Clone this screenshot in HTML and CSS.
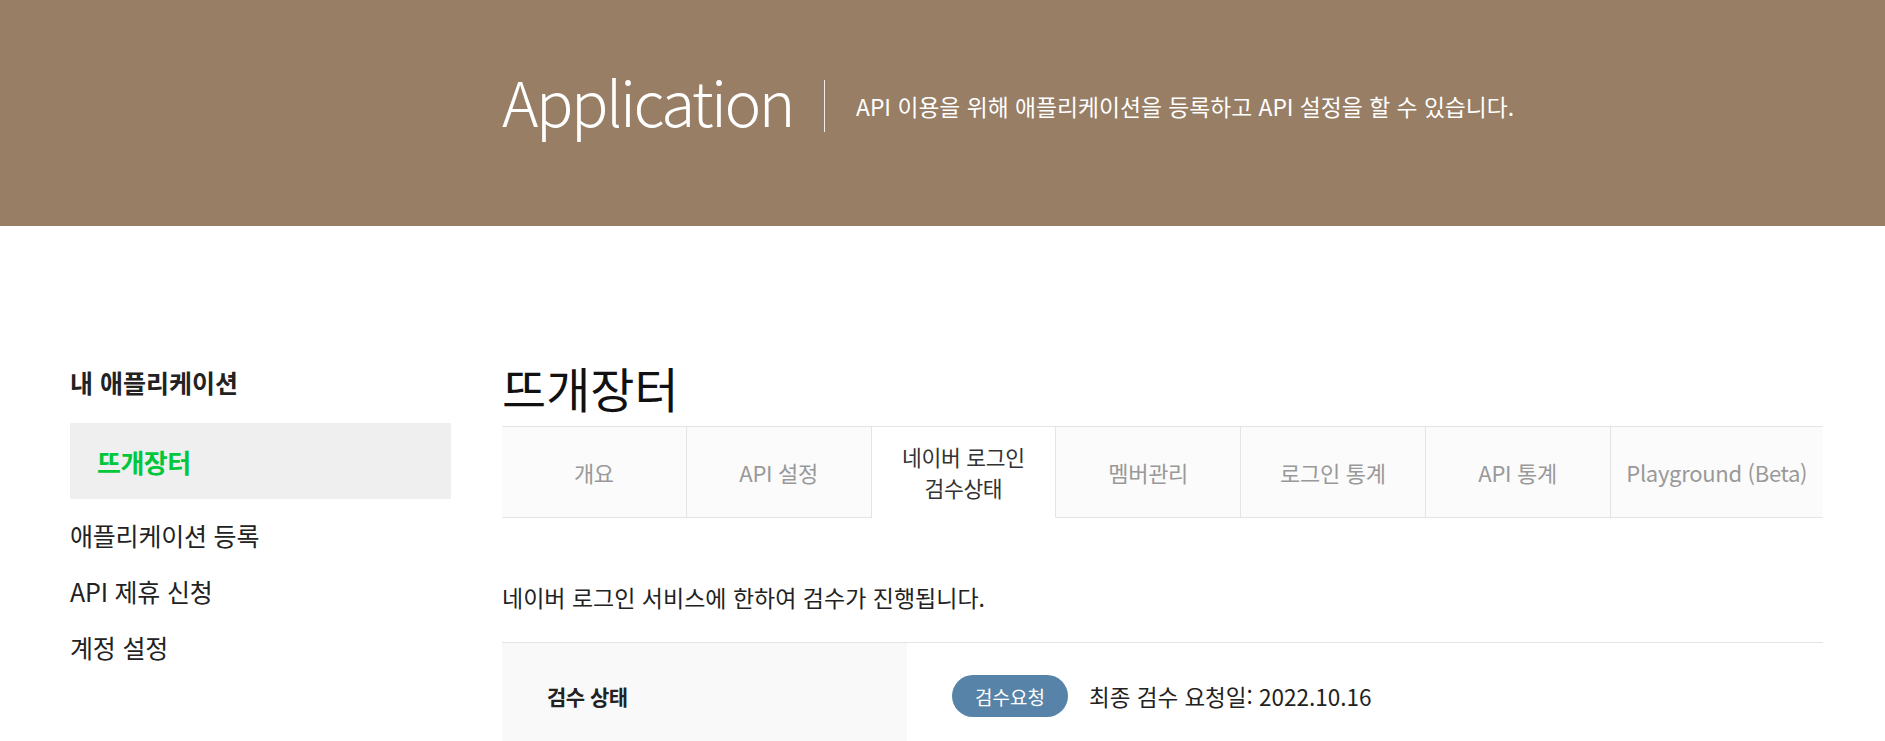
FILE: index.html
```html
<!DOCTYPE html>
<html lang="ko">
<head>
<meta charset="utf-8">
<title>Application</title>
<link rel="stylesheet" href="styles.css">
</head>
<body>
<header class="hero">
  <div class="hero-inner">
    <h1 class="hero-title">Application</h1>
    <span class="hero-sep"></span>
    <p class="hero-desc">API 이용을 위해 애플리케이션을 등록하고 API 설정을 할 수 있습니다.</p>
  </div>
</header>
<div class="page">
  <aside class="sidebar">
    <h2 class="side-head">내 애플리케이션</h2>
    <div class="side-active">뜨개장터</div>
    <ul class="side-list">
      <li>애플리케이션 등록</li>
      <li>API 제휴 신청</li>
      <li>계정 설정</li>
    </ul>
  </aside>
  <main class="main">
    <h2 class="app-title">뜨개장터</h2>
    <nav class="tabs">
      <div class="tab">개요</div>
      <div class="tab">API 설정</div>
      <div class="tab active"><span class="tab-line">네이버 로그인</span><span class="tab-line">검수상태</span></div>
      <div class="tab">멤버관리</div>
      <div class="tab">로그인 통계</div>
      <div class="tab">API 통계</div>
      <div class="tab last">Playground (Beta)</div>
    </nav>
    <p class="notice">네이버 로그인 서비스에 한하여 검수가 진행됩니다.</p>
    <div class="info-table">
      <div class="info-row">
        <div class="info-label">검수 상태</div>
        <div class="info-value">
          <span class="badge">검수요청</span>
          <span class="info-date">최종 검수 요청일: 2022.10.16</span>
        </div>
      </div>
    </div>
  </main>
</div>
</body>
</html>
```
FILE: styles.css
```css
* { box-sizing: border-box; }
body {
  margin: 0;
  font-family: "Noto Sans CJK KR", "Noto Sans", sans-serif;
  color: #222;
  background: #fff;
}
.hero {
  height: 226px;
  background: #977e65;
  display: flex;
  align-items: center;
}
.hero-inner {
  display: flex;
  align-items: center;
  padding-left: 502px;
  margin-top: -14px;
}
.hero-title {
  margin: -12px 0 0;
  font-size: 62px;
  font-weight: 300;
  letter-spacing: -2.5px;
  color: #fff;
  line-height: 70px;
}
.hero-sep {
  width: 1px;
  height: 52px;
  background: rgba(255,255,255,0.85);
  margin: 0 31px 0 31px;
}
.hero-desc {
  margin: 0;
  font-size: 22.8px;
  color: #fff;
  letter-spacing: 0;
}
.page {
  display: flex;
  gap: 51px;
  padding: 140px 62px 0 70px;
}
.sidebar {
  width: 381px;
  flex: none;
}
.side-head {
  margin: 0 0 25px;
  font-size: 25px;
  line-height: 32px;
  font-weight: 700;
  letter-spacing: 0;
  color: #222;
}
.side-active {
  height: 76px;
  background: #efefef;
  color: #00c73c;
  font-size: 26px;
  font-weight: 700;
  letter-spacing: -0.5px;
  padding-left: 27px;
  display: flex;
  align-items: center;
}
.side-list {
  list-style: none;
  margin: 8px 0 0;
  padding: 0;
}
.side-list li {
  font-size: 25px;
  line-height: 32px;
  padding: 12px 0;
  letter-spacing: -0.2px;
  color: #222;
}
.main {
  flex: 1;
  min-width: 0;
}
.app-title {
  margin: -6px 0 12px;
  font-size: 48px;
  line-height: 54px;
  font-weight: 400;
  letter-spacing: 0;
  color: #111;
}
.tabs {
  display: grid;
  grid-template-columns: repeat(6, 1fr) 1.15fr;
  border-top: 1px solid #e4e4e4;
  height: 92px;
}
.tab {
  background: #fbfbfb;
  border-right: 1px solid #e4e4e4;
  border-bottom: 1px solid #e4e4e4;
  display: flex;
  align-items: center;
  justify-content: center;
  text-align: center;
  font-size: 22px;
  line-height: 28px;
  color: #999;
  letter-spacing: -0.3px;
}
.tab.last { border-right: none; }
.tab.active {
  background: #fff;
  border-bottom-color: #fff;
  color: #333;
  flex-direction: column;
}
.tab-line {
  display: block;
  font-size: 21.5px;
  line-height: 31px;
}
.notice {
  margin: 64px 0 30px;
  font-size: 23px;
  line-height: 30px;
  color: #222;
  letter-spacing: 0;
}
.info-table {
  border-top: 1px solid #e4e4e4;
}
.info-row {
  display: flex;
  height: 106px;
}
.info-label {
  width: 405px;
  background: #f9f9f9;
  padding-left: 45px;
  display: flex;
  align-items: center;
  font-size: 21px;
  font-weight: 700;
  color: #222;
  letter-spacing: -0.5px;
}
.info-value {
  display: flex;
  align-items: center;
  padding-left: 45px;
  gap: 21px;
}
.badge {
  width: 116px;
  height: 42px;
  border-radius: 21px;
  background: #5683a7;
  color: #fff;
  font-size: 19px;
  display: flex;
  align-items: center;
  justify-content: center;
}
.info-date {
  font-size: 22.5px;
  color: #222;
  letter-spacing: 0;
}
```
